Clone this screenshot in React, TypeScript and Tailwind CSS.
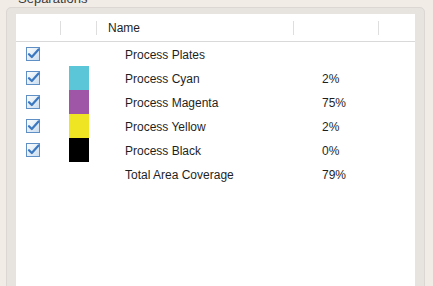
import React from "react";

function Check() {
  return (
    <svg width="14" height="14" viewBox="0 0 14 14">
      <defs>
        <linearGradient id="cbg" x1="0" y1="0" x2="1" y2="1">
          <stop offset="0" stopColor="#ffffff" />
          <stop offset="1" stopColor="#c9dcef" />
        </linearGradient>
      </defs>
      <rect x="0.5" y="0.5" width="13" height="13" fill="url(#cbg)" stroke="#5f8fc4" />
      <path d="M3 7.2 L5.8 10 L12.5 2.5" fill="none" stroke="#3c78c0" strokeWidth="2.2" strokeLinejoin="round" strokeLinecap="round" />
    </svg>
  );
}

const rows = [
  { name: "Process Plates", check: true, color: null as string | null, pct: "" },
  { name: "Process Cyan", check: true, color: "#5bc6d8", pct: "2%" },
  { name: "Process Magenta", check: true, color: "#a056a6", pct: "75%" },
  { name: "Process Yellow", check: true, color: "#f0e523", pct: "2%" },
  { name: "Process Black", check: true, color: "#000000", pct: "0%" },
  { name: "Total Area Coverage", check: false, color: null as string | null, pct: "79%" },
];

export default function App() {
  return (
    <div
      className="w-[433px] h-[286px] overflow-hidden bg-[#f2ece6] text-[#1f1f1f]"
      style={{ fontFamily: '"Liberation Sans", Arial, sans-serif' }}
    >
      <div className="pl-[18px] mt-[-9px] h-[16px] text-[13px] leading-[16px] text-[#3a3a3a]">Separations</div>
      <div className="ml-[6px] w-[419px] h-[300px] border border-[#dcd7d2] bg-[#e7e3df] rounded-[5px] pt-[6px] px-[9px]">
        <div className="bg-white h-full text-[12px]">
          <div className="grid grid-cols-[45px_36px_197px_85px_1fr] h-[28px] border-b border-[#d9d9d9] items-center">
            <div className="h-[14px] border-r border-[#dedede]" />
            <div className="h-[14px] border-r border-[#dedede]" />
            <div className="h-[14px] border-r border-[#dedede] pl-[11px] leading-[14px]">Name</div>
            <div className="h-[14px] border-r border-[#dedede]" />
            <div />
          </div>
          {rows.map((r) => (
            <div key={r.name} className="grid grid-cols-[45px_36px_197px_85px_1fr] h-[24px] items-center">
              <div className="pl-[10px] flex items-center">{r.check ? <Check /> : null}</div>
              <div className="pl-[8px] h-full flex">
                {r.color ? <div className="w-[20px] h-full" style={{ background: r.color }} /> : null}
              </div>
              <div className="pl-[28px] pt-[2px]">{r.name}</div>
              <div className="pl-[28px] pt-[2px]">{r.pct}</div>
              <div />
            </div>
          ))}
        </div>
      </div>
    </div>
  );
}
